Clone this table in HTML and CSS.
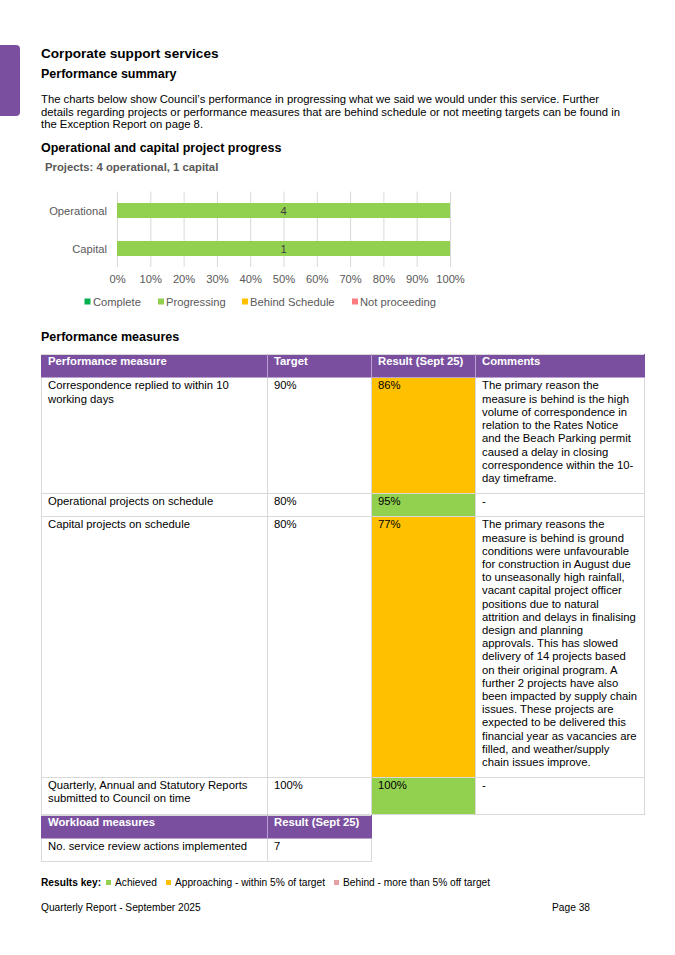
FILE: index.html
```html
<!DOCTYPE html>
<html lang="en">
<head>
<meta charset="utf-8">
<title>Corporate support services</title>
<link rel="stylesheet" href="styles.css">
</head>
<body>
<div class="page">
  <div class="tab"></div>
  <main class="content">
    <h1 class="title">Corporate support services</h1>
    <h2 class="subtitle">Performance summary</h2>
    <p class="intro">The charts below show Council’s performance in progressing what we said we would under this service. Further details regarding projects or performance measures that are behind schedule or not meeting targets can be found in the Exception Report on page 8.</p>
    <h2 class="subtitle sub-progress">Operational and capital project progress</h2>
    <div class="chart-title">Projects: 4 operational, 1 capital</div>
    <svg class="chart" width="460" height="130" viewBox="0 0 460 130">
      <g class="grid">
        <line x1="76.5" y1="11.5" x2="76.5" y2="87"/>
        <line x1="109.8" y1="11.5" x2="109.8" y2="87"/>
        <line x1="143.1" y1="11.5" x2="143.1" y2="87"/>
        <line x1="176.4" y1="11.5" x2="176.4" y2="87"/>
        <line x1="209.7" y1="11.5" x2="209.7" y2="87"/>
        <line x1="243" y1="11.5" x2="243" y2="87"/>
        <line x1="276.3" y1="11.5" x2="276.3" y2="87"/>
        <line x1="309.6" y1="11.5" x2="309.6" y2="87"/>
        <line x1="342.9" y1="11.5" x2="342.9" y2="87"/>
        <line x1="376.2" y1="11.5" x2="376.2" y2="87"/>
        <line x1="409.5" y1="11.5" x2="409.5" y2="87"/>
      </g>
      <rect class="bar" x="76" y="23" width="333" height="15"/>
      <rect class="bar" x="76" y="61" width="333" height="15"/>
      <text class="bar-label" x="242.5" y="34.5">4</text>
      <text class="bar-label" x="242.5" y="72.5">1</text>
      <text class="cat" x="66" y="34.8">Operational</text>
      <text class="cat" x="66" y="73">Capital</text>
      <g class="axis">
        <text x="76.5" y="103.3">0%</text>
        <text x="109.8" y="103.3">10%</text>
        <text x="143.1" y="103.3">20%</text>
        <text x="176.4" y="103.3">30%</text>
        <text x="209.7" y="103.3">40%</text>
        <text x="243" y="103.3">50%</text>
        <text x="276.3" y="103.3">60%</text>
        <text x="309.6" y="103.3">70%</text>
        <text x="342.9" y="103.3">80%</text>
        <text x="376.2" y="103.3">90%</text>
        <text x="409.5" y="103.3">100%</text>
      </g>
      <g class="legend">
        <rect class="sw-complete" x="43.5" y="118.5" width="6" height="6"/>
        <text x="52" y="125.8">Complete</text>
        <rect class="sw-progress" x="117" y="118.5" width="6" height="6"/>
        <text x="125" y="125.8">Progressing</text>
        <rect class="sw-behind" x="201" y="118.5" width="6" height="6"/>
        <text x="209" y="125.8">Behind Schedule</text>
        <rect class="sw-notproc" x="311" y="118.5" width="6" height="6"/>
        <text x="319" y="125.8">Not proceeding</text>
      </g>
    </svg>

    <h2 class="subtitle sub-measures">Performance measures</h2>
    <table class="measures">
      <colgroup>
        <col class="c-measure"><col class="c-target"><col class="c-result"><col class="c-comments">
      </colgroup>
      <thead>
        <tr><th>Performance measure</th><th>Target</th><th>Result (Sept 25)</th><th>Comments</th></tr>
      </thead>
      <tbody>
        <tr>
          <td>Correspondence replied to within 10<br>working days</td>
          <td>90%</td>
          <td class="res approaching">86%</td>
          <td>The primary reason the<br>measure is behind is the high<br>volume of correspondence in<br>relation to the Rates Notice<br>and the Beach Parking permit<br>caused a delay in closing<br>correspondence within the 10-<br>day timeframe.</td>
        </tr>
        <tr>
          <td>Operational projects on schedule</td>
          <td>80%</td>
          <td class="res achieved">95%</td>
          <td>-</td>
        </tr>
        <tr>
          <td>Capital projects on schedule</td>
          <td>80%</td>
          <td class="res approaching">77%</td>
          <td>The primary reasons the<br>measure is behind is ground<br>conditions were unfavourable<br>for construction in August due<br>to unseasonally high rainfall,<br>vacant capital project officer<br>positions due to natural<br>attrition and delays in finalising<br>design and planning<br>approvals. This has slowed<br>delivery of 14 projects based<br>on their original program. A<br>further 2 projects have also<br>been impacted by supply chain<br>issues. These projects are<br>expected to be delivered this<br>financial year as vacancies are<br>filled, and weather/supply<br>chain issues improve.</td>
        </tr>
        <tr>
          <td>Quarterly, Annual and Statutory Reports<br>submitted to Council on time</td>
          <td>100%</td>
          <td class="res achieved">100%</td>
          <td>-</td>
        </tr>
      </tbody>
    </table>
    <table class="measures workload">
      <colgroup>
        <col class="c-measure"><col class="c-target">
      </colgroup>
      <thead>
        <tr><th>Workload measures</th><th>Result (Sept 25)</th></tr>
      </thead>
      <tbody>
        <tr><td>No. service review actions implemented</td><td>7</td></tr>
      </tbody>
    </table>

    <div class="key">
      <strong>Results key:</strong>
      <span class="key-item"><span class="dot dot-achieved"></span>Achieved</span>
      <span class="key-item"><span class="dot dot-approaching"></span>Approaching - within 5% of target</span>
      <span class="key-item"><span class="dot dot-behind"></span>Behind - more than 5% off target</span>
    </div>

    <footer class="footer">
      <span>Quarterly Report - September 2025</span>
      <span>Page 38</span>
    </footer>
  </main>
</div>
</body>
</html>
```

FILE: styles.css
```css
* { box-sizing: border-box; }

html, body {
  margin: 0;
  padding: 0;
  background: #ffffff;
}

body {
  font-family: "Liberation Sans", Arial, sans-serif;
  color: #000000;
  font-size: 11.3px;
}

.page {
  display: flex;
  width: 675px;
}

.tab {
  flex: 0 0 20px;
  height: 71px;
  margin-top: 45px;
  margin-right: 21px;
  background: #7b4fa0;
  border-radius: 0 4px 4px 0;
}

.content {
  flex: 0 0 603px;
  display: flex;
  flex-direction: column;
  padding-top: 46px;
}

.title {
  margin: 0;
  font-size: 13.6px;
  line-height: 16px;
  font-weight: bold;
}

.subtitle {
  margin: 5px 0 0;
  font-size: 12.5px;
  line-height: 15px;
  font-weight: bold;
}

.intro {
  margin: 11px 0 0;
  width: 588px;
  font-size: 11.3px;
  line-height: 12.6px;
}

.sub-progress { margin-top: 10px; }

.chart-title {
  margin: 5px 0 0 4px;
  font-size: 11.3px;
  line-height: 13px;
  font-weight: bold;
  color: #595959;
}

.chart {
  display: block;
  margin-top: 6px;
  font-family: "Liberation Sans", Arial, sans-serif;
  font-size: 11.2px;
}

.chart .grid line {
  stroke: #d9d9d9;
  stroke-width: 1;
}

.chart .bar { fill: #92d050; }

.chart .bar-label {
  fill: #404040;
  text-anchor: middle;
}

.chart .cat {
  fill: #595959;
  text-anchor: end;
}

.chart .axis text {
  fill: #595959;
  text-anchor: middle;
}

.chart .legend text { fill: #595959; }

.sw-complete { fill: #00b050; }
.sw-progress { fill: #92d050; }
.sw-behind { fill: #ffc000; }
.sw-notproc { fill: #ff7c80; }

.sub-measures { margin-top: 20px; }

.measures {
  border-collapse: collapse;
  table-layout: fixed;
  width: 603px;
  font-size: 11.3px;
  line-height: 13.2px;
}

.sub-measures + .measures { margin-top: 9.5px; }

.measures.workload { width: 330px; }

.c-measure { width: 226px; }
.c-target { width: 104px; }
.c-result { width: 104px; }
.c-comments { width: 169px; }

.measures th,
.measures td {
  border: 1px solid #d9d9d9;
  text-align: left;
  vertical-align: top;
}

.measures th {
  background: #7b4fa0;
  color: #ffffff;
  font-weight: bold;
  padding: 0 6px 9px;
  border-color: #b9a2cd;
  border-top-color: #d9d9d9;
}

.measures th:first-child { border-left-color: #7b4fa0; }
.measures th:last-child { border-right-color: #7b4fa0; }

.measures td {
  padding: 1px 6px 8px;
}

.measures .res.approaching { background: #ffc000; }
.measures .res.achieved { background: #92d050; }

.key {
  margin-top: 15px;
  display: flex;
  align-items: center;
  font-size: 10.2px;
  line-height: 12px;
}

.key strong { margin-right: 5px; }

.key-item {
  display: inline-flex;
  align-items: center;
  margin-right: 9px;
}

.dot {
  display: inline-block;
  width: 5px;
  height: 5px;
  margin-right: 4px;
}

.dot-achieved { background: #92d050; }
.dot-approaching { background: #ffc000; }
.dot-behind { background: #e3a1a6; }

.footer {
  margin-top: 13px;
  width: 549px;
  display: flex;
  justify-content: space-between;
  font-size: 10.2px;
  line-height: 12px;
}
```
